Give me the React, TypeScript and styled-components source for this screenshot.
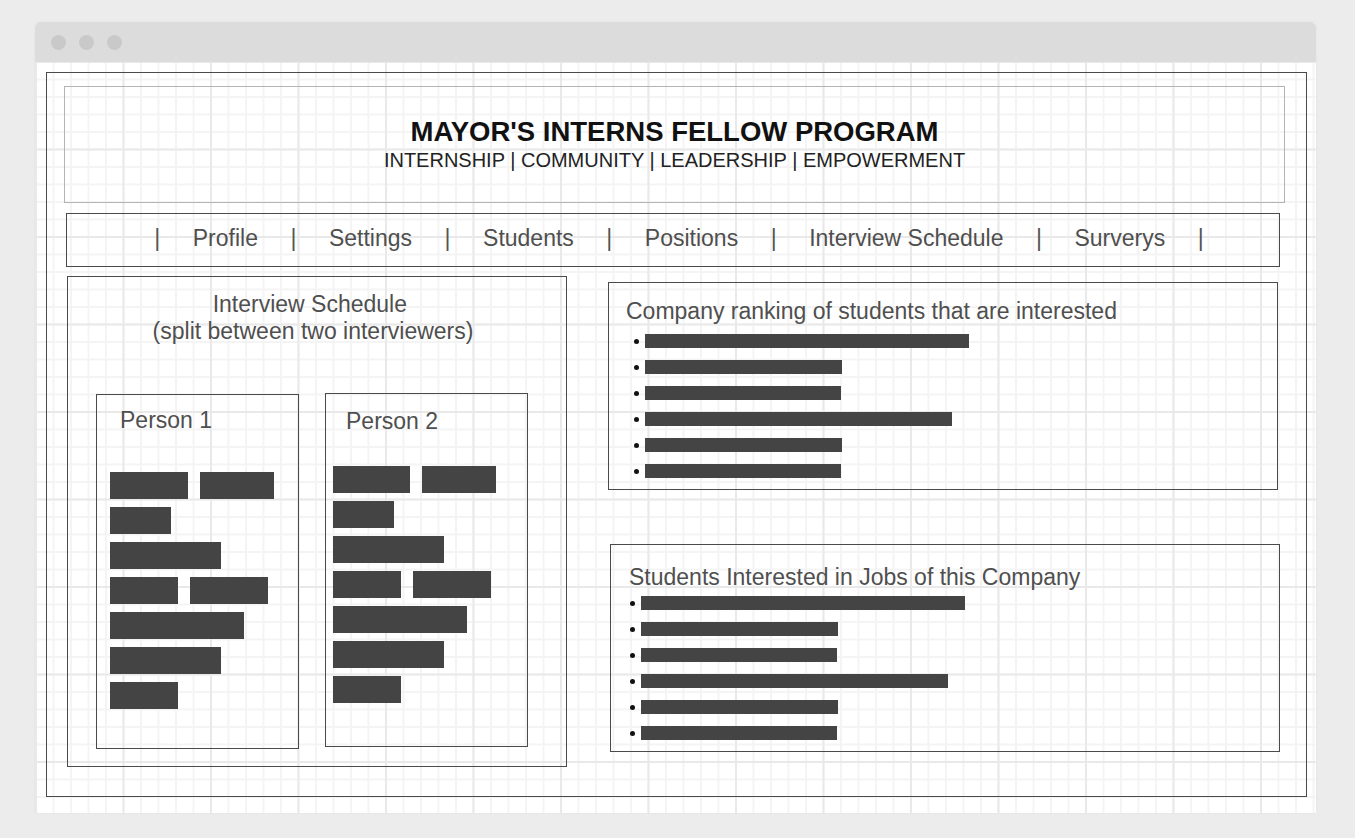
import React from "react";
import styled, { createGlobalStyle } from "styled-components";

const Global = createGlobalStyle`
  html, body { margin: 0; padding: 0; background: #ececec; }
  body { font-family: "Liberation Sans", Arial, sans-serif; }
  * { box-sizing: border-box; }
`;

const Page = styled.div`
  width: 1355px;
  height: 838px;
  padding: 22px 0 0 35px;
  background: #ececec;
`;

const Window = styled.div`
  width: 1281px;
  height: 791px;
  display: flex;
  flex-direction: column;
  box-shadow: 0 0 2px rgba(0, 0, 0, 0.06);
`;

const TitleBar = styled.div`
  height: 40px;
  background: #dcdcdc;
  border-radius: 6px 6px 0 0;
  display: flex;
  align-items: center;
  gap: 13px;
  padding-left: 16px;
`;

const Dot = styled.span`
  width: 15px;
  height: 15px;
  border-radius: 50%;
  background: #c9c9c9;
`;

const Canvas = styled.div`
  flex: 1;
  background-color: #ffffff;
  background-image:
    linear-gradient(to right, #e9e9e9 2px, transparent 2px),
    linear-gradient(to bottom, #e9e9e9 2px, transparent 2px),
    linear-gradient(to right, #f4f4f4 2px, transparent 2px),
    linear-gradient(to bottom, #f4f4f4 2px, transparent 2px);
  background-size: 87.5px 87.5px, 87.5px 87.5px, 17.5px 17.5px, 17.5px 17.5px;
  background-position: 0 -1px, 0 -1px, 0 -1px, 0 -1px;
  padding: 10px 0 0 11px;
`;

const Frame = styled.div`
  width: 1261px;
  height: 725px;
  border: 1px solid #4a4a4a;
  display: flex;
  flex-direction: column;
`;

const Header = styled.div`
  margin: 13px 0 0 17px;
  width: 1221px;
  height: 117px;
  border: 1px solid #b4b4b4;
  display: flex;
  flex-direction: column;
  align-items: center;
  padding-top: 30px;
`;

const Title = styled.div`
  font-size: 27.5px;
  font-weight: bold;
  color: #111;
  line-height: 30px;
`;

const Subtitle = styled.div`
  font-size: 20px;
  color: #222;
  line-height: 23px;
  margin-top: 2px;
`;

const Nav = styled.div`
  margin: 10px 0 0 19px;
  width: 1214px;
  height: 54px;
  border: 1px solid #4a4a4a;
  display: flex;
  align-items: center;
  justify-content: center;
  gap: 32.5px;
  padding-left: 12px;
  padding-bottom: 4px;
  font-size: 23px;
  color: #4f4f4f;
`;

const NavItem = styled.span``;

const Pipe = styled.span`
  color: #555;
`;

const Main = styled.div`
  display: flex;
  margin: 9px 0 0 20px;
`;

const ScheduleBox = styled.div`
  width: 500px;
  height: 491px;
  border: 1px solid #4a4a4a;
  display: flex;
  flex-direction: column;
`;

const ScheduleTitle = styled.div`
  text-align: center;
  font-size: 23px;
  line-height: 27px;
  color: #4f4f4f;
  padding: 14px 8px 0 0;
  white-space: pre;
`;

const People = styled.div`
  display: flex;
  align-items: flex-start;
  margin: 49px 0 0 28px;
  gap: 26px;
`;

const PersonBox = styled.div<{ $h: number; $up: number }>`
  width: 203px;
  height: ${(p) => p.$h}px;
  margin-top: ${(p) => -p.$up}px;
  border: 1px solid #4a4a4a;
  display: flex;
  flex-direction: column;
`;

const PersonLabel = styled.div<{ $left: number; $top: number }>`
  font-size: 23px;
  line-height: 27px;
  color: #4f4f4f;
  padding: ${(p) => p.$top}px 0 0 ${(p) => p.$left}px;
`;

const Blocks = styled.div<{ $left: number; $top: number }>`
  display: flex;
  flex-direction: column;
  gap: 8px;
  padding: ${(p) => p.$top}px 0 0 ${(p) => p.$left}px;
`;

const BlockRow = styled.div`
  display: flex;
  gap: 12px;
`;

const Block = styled.div`
  height: 27px;
  background: #444;
`;

const RightCol = styled.div`
  display: flex;
  flex-direction: column;
  margin-left: 41px;
`;

const ListBox = styled.div<{ $top: number; $left: number; $titleTop: number }>`
  width: 670px;
  height: 208px;
  margin-top: ${(p) => p.$top}px;
  margin-left: ${(p) => p.$left}px;
  border: 1px solid #4a4a4a;
  padding-top: ${(p) => p.$titleTop}px;
`;

const ListTitle = styled.div<{ $left: number }>`
  font-size: 23px;
  line-height: 27px;
  color: #4f4f4f;
  padding-left: ${(p) => p.$left}px;
`;

const List = styled.ul<{ $left: number; $top: number }>`
  list-style: none;
  margin: 0;
  padding: ${(p) => p.$top}px 0 0 ${(p) => p.$left}px;
  display: flex;
  flex-direction: column;
  gap: 12px;
`;

const ListItem = styled.li`
  display: flex;
  align-items: center;
  height: 14px;
  gap: 6px;
  &::before {
    content: "";
    width: 5px;
    height: 5px;
    border-radius: 50%;
    background: #111;
  }
`;

const Bar = styled.div`
  height: 14px;
  background: #444;
`;

const person1: number[][] = [[78, 74], [61], [111], [68, 78], [134], [111], [68]];
const person2: number[][] = [[77, 74], [61], [111], [68, 78], [134], [111], [68]];
const barWidths = [324, 197, 196, 307, 197, 196];

const navItems = ["Profile", "Settings", "Students", "Positions", "Interview Schedule", "Surverys"];

function BlockList({ rows, left, top }: { rows: number[][]; left: number; top: number }) {
  return (
    <Blocks $left={left} $top={top}>
      {rows.map((r, i) => (
        <BlockRow key={i}>
          {r.map((w, j) => (
            <Block key={j} style={{ width: w }} />
          ))}
        </BlockRow>
      ))}
    </Blocks>
  );
}

function BarList({ left, top }: { left: number; top: number }) {
  return (
    <List $left={left} $top={top}>
      {barWidths.map((w, i) => (
        <ListItem key={i}>
          <Bar style={{ width: w }} />
        </ListItem>
      ))}
    </List>
  );
}

export default function App() {
  return (
    <>
      <Global />
      <Page>
        <Window>
          <TitleBar>
            <Dot />
            <Dot />
            <Dot />
          </TitleBar>
          <Canvas>
            <Frame>
              <Header>
                <Title>MAYOR'S INTERNS FELLOW PROGRAM</Title>
                <Subtitle>INTERNSHIP | COMMUNITY | LEADERSHIP | EMPOWERMENT</Subtitle>
              </Header>
              <Nav>
                <Pipe>|</Pipe>
                {navItems.map((n) => (
                  <React.Fragment key={n}>
                    <NavItem>{n}</NavItem>
                    <Pipe>|</Pipe>
                  </React.Fragment>
                ))}
              </Nav>
              <Main>
                <ScheduleBox>
                  <ScheduleTitle>
                    {"Interview Schedule\u00a0\n(split between two interviewers)"}
                  </ScheduleTitle>
                  <People>
                    <PersonBox $h={355} $up={0}>
                      <PersonLabel $left={23} $top={12}>Person 1</PersonLabel>
                      <BlockList rows={person1} left={13} top={38} />
                    </PersonBox>
                    <PersonBox $h={354} $up={1}>
                      <PersonLabel $left={20} $top={14}>Person 2</PersonLabel>
                      <BlockList rows={person2} left={7} top={31} />
                    </PersonBox>
                  </People>
                </ScheduleBox>
                <RightCol>
                  <ListBox $top={6} $left={0} $titleTop={15}>
                    <ListTitle $left={17}>Company ranking of students that are interested</ListTitle>
                    <BarList left={25} top={9} />
                  </ListBox>
                  <ListBox $top={54} $left={2} $titleTop={19}>
                    <ListTitle $left={18}>Students Interested in Jobs of this Company</ListTitle>
                    <BarList left={19} top={5} />
                  </ListBox>
                </RightCol>
              </Main>
            </Frame>
          </Canvas>
        </Window>
      </Page>
    </>
  );
}
